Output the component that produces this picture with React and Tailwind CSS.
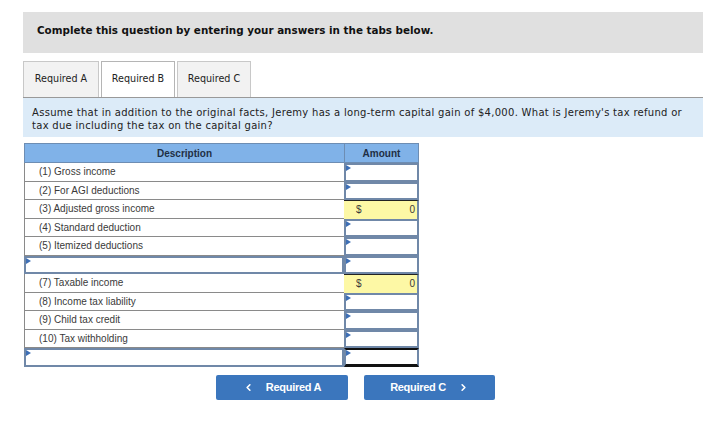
import React from "react";
import { ChevronLeft, ChevronRight } from "lucide-react";

const rows = [
  { label: "(1) Gross income", kind: "input" },
  { label: "(2) For AGI deductions", kind: "input" },
  { label: "(3) Adjusted gross income", kind: "calc" },
  { label: "(4) Standard deduction", kind: "input" },
  { label: "(5) Itemized deductions", kind: "input" },
  { label: null, kind: "input" },
  { label: "(7) Taxable income", kind: "calc" },
  { label: "(8) Income tax liability", kind: "input" },
  { label: "(9) Child tax credit", kind: "input" },
  { label: "(10) Tax withholding", kind: "input" },
  { label: null, kind: "input", last: true },
];

const Marker = () => (
  <span className="absolute left-0 top-0 w-0 h-0 border-t-[3px] border-b-[3px] border-l-[5px] border-t-transparent border-b-transparent border-l-[#3d6fb6]" />
);

const App = () => {
  return (
    <div className="w-[715px] h-[427px] bg-white pt-3 px-[23px] font-['DejaVu_Sans',Verdana,sans-serif]">
      {/* Instructions */}
      <div className="w-[680px] h-[41px] bg-[#e0e0e0] pl-[14px] pt-[11px] text-[10.35px] font-bold text-[#111]">
        Complete this question by entering your answers in the tabs below.
      </div>

      {/* Tabs */}
      <div className="flex mt-2 h-[36px] gap-[2px] text-[9.6px] text-[#222]">
        <div className="w-[76px] border border-b-0 border-[#c8c8c8] bg-[#f2f2f2] flex items-center justify-center">
          Required A
        </div>
        <div className="w-[74px] border border-b-0 border-[#b5b5b5] bg-white flex items-center justify-center">
          Required B
        </div>
        <div className="w-[74px] border border-b-0 border-[#c8c8c8] bg-[#f2f2f2] flex items-center justify-center">
          Required C
        </div>
      </div>

      {/* Question */}
      <div className="w-[680px] h-[40px] bg-[#dcebf8] border-t border-[#999] px-[9px] pt-[8px] text-[10px] tracking-[0.29px] leading-[13px] text-[#222]">
        Assume that in addition to the original facts, Jeremy has a long-term capital gain of $4,000. What is Jeremy's tax refund or
        tax due including the tax on the capital gain?
      </div>

      {/* Table */}
      <div className="mt-[6px] ml-[1px] w-[395px] font-['Liberation_Sans',Arial,sans-serif] text-[10px] text-[#3a3a3a]">
        <div className="flex h-[20px] bg-[#80b2e8] border border-[#6d8db3] font-bold text-[#1f2f45] text-[10px]">
          <div className="w-[320px] flex items-center justify-center border-r border-[#6d8db3]">Description</div>
          <div className="flex-1 flex items-center justify-center">Amount</div>
        </div>
        {rows.map((r, i) => (
          <div key={i} className="flex h-[18.5px]">
            {r.label ? (
              <div className="w-[320px] flex items-center pl-[14px] border-l border-b border-[#8a8a8a] bg-white">
                {r.label}
              </div>
            ) : (
              <div className="relative w-[320px] border-2 border-[#7088a8] bg-white">
                <Marker />
              </div>
            )}
            {r.kind === "calc" ? (
              <div className="flex-1 flex items-center justify-between pl-[12px] pr-[2px] bg-[#fdf8a5] border-t border-[#222] border-r-2 border-r-[#7088a8]">
                <span>$</span>
                <span>0</span>
              </div>
            ) : (
              <div
                className={`relative flex-1 border-2 border-[#7088a8] bg-white ${
                  r.last ? "border-t-[#111] border-b-[3px] border-b-[#111]" : ""
                }`}
              >
                <Marker />
              </div>
            )}
          </div>
        ))}
      </div>

      {/* Nav buttons */}
      <div className="flex gap-4 mt-[8px] ml-[193px] font-['Liberation_Sans',Arial,sans-serif] text-[11px] font-bold text-white">
        <button className="w-[132px] h-[25px] bg-[#3b76bd] rounded-[2px] flex items-center justify-center gap-3 tracking-[-0.3px]">
          <ChevronLeft size={11} strokeWidth={3.5} />
          Required A
        </button>
        <button className="w-[131px] h-[25px] bg-[#3b76bd] rounded-[2px] flex items-center justify-center gap-3 tracking-[-0.3px]">
          Required C
          <ChevronRight size={11} strokeWidth={3.5} />
        </button>
      </div>
    </div>
  );
};

export default App;
